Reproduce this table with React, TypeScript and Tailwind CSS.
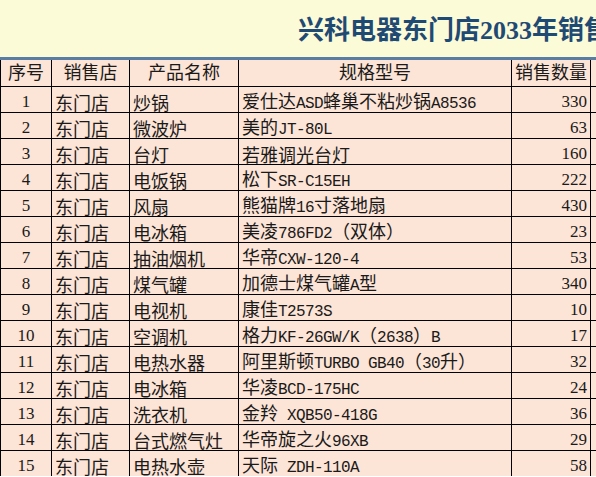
import React from "react";

type Row = {
  no: number;
  store: string;
  name: string;
  spec: string;
  qty: number;
};

const rows: Row[] = [
  { no: 1, store: "东门店", name: "炒锅", spec: "爱仕达ASD蜂巢不粘炒锅A8536", qty: 330 },
  { no: 2, store: "东门店", name: "微波炉", spec: "美的JT-80L", qty: 63 },
  { no: 3, store: "东门店", name: "台灯", spec: "若雅调光台灯", qty: 160 },
  { no: 4, store: "东门店", name: "电饭锅", spec: "松下SR-C15EH", qty: 222 },
  { no: 5, store: "东门店", name: "风扇", spec: "熊猫牌16寸落地扇", qty: 430 },
  { no: 6, store: "东门店", name: "电冰箱", spec: "美凌786FD2（双体）", qty: 23 },
  { no: 7, store: "东门店", name: "抽油烟机", spec: "华帝CXW-120-4", qty: 53 },
  { no: 8, store: "东门店", name: "煤气罐", spec: "加德士煤气罐A型", qty: 340 },
  { no: 9, store: "东门店", name: "电视机", spec: "康佳T2573S", qty: 10 },
  { no: 10, store: "东门店", name: "空调机", spec: "格力KF-26GW/K（2638）B", qty: 17 },
  { no: 11, store: "东门店", name: "电热水器", spec: "阿里斯顿TURBO GB40（30升）", qty: 32 },
  { no: 12, store: "东门店", name: "电冰箱", spec: "华凌BCD-175HC", qty: 24 },
  { no: 13, store: "东门店", name: "洗衣机", spec: "金羚 XQB50-418G", qty: 36 },
  { no: 14, store: "东门店", name: "台式燃气灶", spec: "华帝旋之火96XB", qty: 29 },
  { no: 15, store: "东门店", name: "电热水壶", spec: "天际 ZDH-110A", qty: 58 }
];

const headers = ["序号", "销售店", "产品名称", "规格型号", "销售数量", ""];

// latin runs are half width like in the sheet's font
function Mixed({ text }: { text: string }) {
  const parts = text.split(/([\x00-\x7F]+)/).filter((p) => p !== "");
  return (
    <span>
      {parts.map((p, i) =>
        /^[\x00-\x7F]+$/.test(p) ? (
          <span
            key={i}
            className="font-['Liberation_Mono'] text-[16px] tracking-[-0.6px] whitespace-pre"
          >
            {p}
          </span>
        ) : (
          <span key={i}>{p}</span>
        )
      )}
    </span>
  );
}

const cell = "bg-[#fce4d6] flex items-center px-[3px] whitespace-nowrap leading-[20px]";
const body = `${cell} pt-[4px]`;
const num = "font-['Liberation_Serif',serif] text-[17px]";

export default function App() {
  return (
    <div className="w-[596px] h-[477px] overflow-hidden bg-white text-[#1a1a1a] font-['Noto_Sans_CJK_SC',sans-serif]">
      {/* Title */}
      <div className="h-[60px] bg-[#fcfbd8] border-b-[3px] border-[#5a7ea3] pl-[298px] pt-[18px] whitespace-nowrap overflow-hidden leading-[26px]">
        <span className="text-[26px] font-bold text-[#1f4a74] font-['Liberation_Serif','Noto_Sans_CJK_SC',serif]">
          兴科电器东门店2033年销售统计表
        </span>
      </div>

      {/* Sheet */}
      <div className="w-[650px] grid grid-cols-[50px_77px_108px_272px_78px_60px] grid-rows-[26px_repeat(15,25px)] gap-px bg-black pl-px text-[18px]">
        {headers.map((h, i) => (
          <div key={"h" + i} className={`${cell} justify-center pb-[4px]`}>
            {h}
          </div>
        ))}
        {rows.map((r) => (
          <React.Fragment key={r.no}>
            <div className={`${body} justify-center ${num}`}>{r.no}</div>
            <div className={body}>{r.store}</div>
            <div className={body}>{r.name}</div>
            <div className={body}>
              <Mixed text={r.spec} />
            </div>
            <div className={`${body} justify-end ${num}`}>{r.qty}</div>
            <div className={body}></div>
          </React.Fragment>
        ))}
      </div>
    </div>
  );
}
